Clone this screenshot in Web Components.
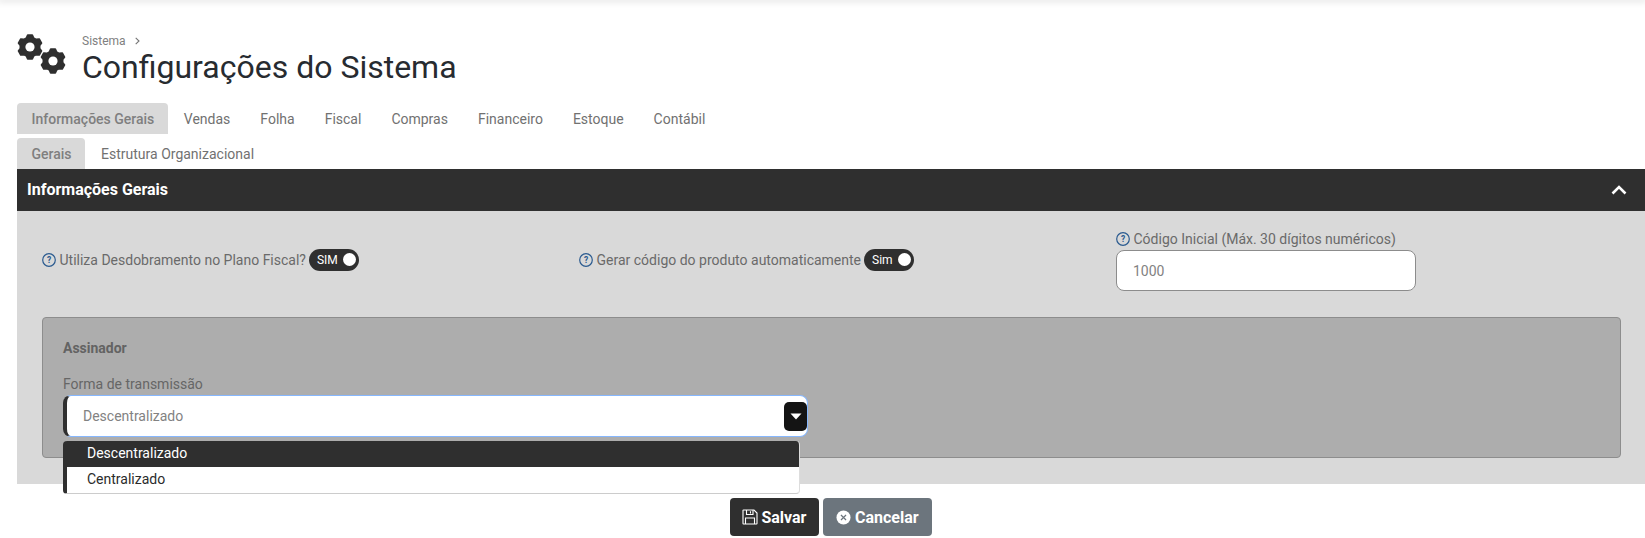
<!DOCTYPE html>
<html lang="pt"><head><meta charset="utf-8"><title>Configurações do Sistema</title>
<style>html,body{margin:0;background:#fff;font-family:Roboto,"Liberation Sans",sans-serif;overflow:hidden}</style></head>
<body>
<app-page></app-page>
<script>
const def=(name,css,html)=>customElements.define(name,class extends HTMLElement{
  constructor(){super();const r=this.attachShadow({mode:'open'});r.innerHTML=`<style>${css}</style>${typeof html==='function'?html(this):html}`;}
});
const help=`<svg width="14" height="14" viewBox="0 0 14 14" style="flex:none"><circle cx="7" cy="7" r="6.300" fill="none" stroke="#2a5a8f" stroke-width="1.200"/><text x="7" y="10" text-anchor="middle" font-family="Roboto" font-size="8.500" font-weight="700" fill="#2a5a8f">?</text></svg>`;
const gearPoly=(()=>{const p=[];for(let i=0;i<6;i++){const a=i*60-90;
  for(const [r,d] of [[9.800,-21],[12.200,-11],[12.200,11],[9.800,21]]){const t=(a+d)*Math.PI/180;p.push((13+r*Math.cos(t)).toFixed(2)+','+(13+r*Math.sin(t)).toFixed(2));}}
  return p.join(' ');})();
const gear=(x,y)=>`<g transform="translate(${x} ${y})"><polygon points="${gearPoly}" fill="#2f2f2f" stroke="#2f2f2f" stroke-width="1.600" stroke-linejoin="round"/><circle cx="13" cy="13" r="4.600" fill="#fff"/></g>`;

def('x-tab',`:host{display:block;font-size:14px;line-height:33px;height:31px;color:#717171;border-radius:4px 4px 0 0;white-space:nowrap}
:host([active]){background:#d9d9d9;color:#7f7f7f;font-weight:500;padding:0 13.500px 0 14.500px}
:host(:not([active])){padding-left:16px;padding-right:14px}`,`<slot></slot>`);
def('x-tabs',`:host{display:flex;padding-left:17px}`,`<slot></slot>`);
def('x-toggle',`:host{display:inline-flex;align-items:center;box-sizing:border-box;height:22px;border-radius:11px;background:#2f2f2f;color:#fff;font-size:12px;padding:0 3px 0 8px;gap:5.500px;flex:none}
i{width:13px;height:13px;border-radius:50%;background:#fff;display:block}`,`<slot></slot><i></i>`);
def('x-help-label',`:host{display:flex;align-items:center;gap:3.500px;font-size:14px;color:#6a6a6a;white-space:nowrap}`,()=>help+`<slot></slot>`);
def('x-dropdown',`:host{display:block;position:absolute;left:0;top:46px;width:737px;box-sizing:border-box;background:#fff;border-left:4px solid #2f2f2f;border-radius:4px;border-bottom:1px solid #ccc;border-right:1px solid #ddd;overflow:hidden;font-size:14px;color:#2b2b2b}
div{height:26px;line-height:24px;padding-left:20px}
.on{background:#2f2f2f;color:#fff}`,`<div class="on">Descentralizado</div><div>Centralizado</div>`);
def('x-select',`:host{display:block;position:relative;width:745px;height:42px}
.box{box-sizing:border-box;height:42px;background:#fff;border:1px solid #86b7fe;border-left:4px solid #2f2f2f;border-radius:8px;display:flex;align-items:center;justify-content:space-between;padding:0 0 0 16px;font-size:14px;color:#828282}
.arrow{width:23px;height:29px;border-radius:5px;background:#141414;display:flex;align-items:center;justify-content:center}
.arrow svg{display:block}`,`<div class="box"><span>Descentralizado</span><span class="arrow"><svg width="12" height="7" viewBox="0 0 12 7"><path d="M.5.5h11L6 6.500z" fill="#fff"/></svg></span></div><x-dropdown></x-dropdown>`);
def('x-button',`:host{display:inline-flex;align-items:center;justify-content:center;gap:3px;height:38px;box-sizing:border-box;border-radius:4px;font-size:16px;font-weight:700;color:#fff;background:#2f2f2f;padding:0 13px 0 12px}
:host([kind=gray]){background:#6c757d;gap:4px;padding:0 13px 0 12.500px}svg{display:block;flex:none}`,h=>h.getAttribute('kind')==='gray'
 ?`<svg width="15" height="15" viewBox="0 0 16 16"><circle cx="8" cy="8" r="7.500" fill="#fff"/><path d="M5.300 5.300l5.400 5.400M10.700 5.300l-5.400 5.400" stroke="#6c757d" stroke-width="1.300" fill="none"/></svg><slot></slot>`
 :`<svg width="16" height="16" viewBox="0 0 16 16" fill="none" stroke="#fff" stroke-width="1.100"><path d="M1.500 1h10.500l3 3v10.500a.5.5 0 0 1-.5.5h-13a.5.5 0 0 1-.5-.5V1.500a.5.5 0 0 1 .5-.5z"/><path d="M4.500 1v4.500h6.500V1M8.500 2.200v2.200M3.500 15V9h9v6"/></svg><slot></slot>`);
def('x-page-head',`:host{display:flex;padding:34px 0 0 17px;height:69px;gap:15px}
svg.g{display:block;flex:none;width:50px;height:41px}
.crumb{font-size:12px;color:#808080;line-height:14px;display:flex;align-items:center;gap:9px;margin-bottom:-1px}
h1{font-size:32px;font-weight:400;color:#272b30;margin:0;line-height:40px;white-space:nowrap}`,
`<svg class="g" viewBox="0 0 50 41">${gear(0,0)}${gear(23,14)}</svg>
<div><div class="crumb"><span>Sistema</span><svg width="5" height="8" viewBox="0 0 5 8"><path d="M.7.8L4 4 .7 7.200" fill="none" stroke="#757575" stroke-width="1.100"/></svg></div><h1>Configurações do Sistema</h1></div>`);
def('x-panel',`:host{display:block;margin-left:17px;background:#d9d9d9}
header{height:42px;background:#2f2f2f;color:#fff;font-weight:700;font-size:16px;line-height:40px;display:flex;align-items:center;justify-content:space-between;padding:0 18px 0 10px}
svg{display:block}
.body{height:273px;box-sizing:border-box;padding-top:20px}`,
`<header><span>Informações Gerais</span><svg width="16" height="10" viewBox="0 0 16 10"><path d="M1.500 8.500L8 2l6.500 6.500" stroke="#fff" stroke-width="2.600" fill="none"/></svg></header><div class="body"><slot></slot></div>`);
def('x-fields',`:host{display:grid;grid-template-columns:537px 537px 300px;height:77px;margin-left:25px}
.c1{display:flex;align-items:center;gap:3px;height:39px;margin-top:9px}
input{display:block;box-sizing:border-box;width:300px;height:41px;border:1px solid #8c8c8c;border-radius:8px;background:#fff;padding:0 16px;font:14px Roboto,sans-serif;color:#828282;margin-top:3px}
input::placeholder{color:#828282}`,
`<div class="c1"><x-help-label>Utiliza Desdobramento no Plano Fiscal?</x-help-label><x-toggle>SIM</x-toggle></div>
<div class="c1"><x-help-label>Gerar código do produto automaticamente</x-help-label><x-toggle>Sim</x-toggle></div>
<div><x-help-label>Código Inicial (Máx. 30 dígitos numéricos)</x-help-label><input placeholder="1000"></div>`);
def('x-signer',`:host{display:block;margin:9px 24px 0 25px;height:141px;box-sizing:border-box;background:#adadad;border:1px solid #8d8d8d;border-radius:4px;padding:22px 20px 0}
.t{font-size:14px;font-weight:700;color:#636363;line-height:17px}
.l{font-size:14px;color:#666;line-height:17px;margin:19px 0 2px}`,
`<div class="t">Assinador</div><div class="l">Forma de transmissão</div><x-select></x-select>`);
def('x-actions',`:host{display:flex;justify-content:center;gap:4px;padding:14px 0 0 0;margin-left:17px}`,`<slot></slot>`);
def('app-page',`:host{display:block;height:538px;overflow:hidden;position:relative}
.top{height:0;box-shadow:0 0 6px 2px rgba(0,0,0,.12)}
.sub{margin-top:4px}`,
`<div class="top"></div><x-page-head></x-page-head>
<x-tabs><x-tab active>Informações Gerais</x-tab><x-tab>Vendas</x-tab><x-tab>Folha</x-tab><x-tab>Fiscal</x-tab><x-tab>Compras</x-tab><x-tab>Financeiro</x-tab><x-tab>Estoque</x-tab><x-tab>Contábil</x-tab></x-tabs>
<x-tabs class="sub"><x-tab active>Gerais</x-tab><x-tab>Estrutura Organizacional</x-tab></x-tabs>
<x-panel><x-fields></x-fields><x-signer></x-signer></x-panel>
<x-actions><x-button>Salvar</x-button><x-button kind="gray">Cancelar</x-button></x-actions>`);
</script>
</body></html>
